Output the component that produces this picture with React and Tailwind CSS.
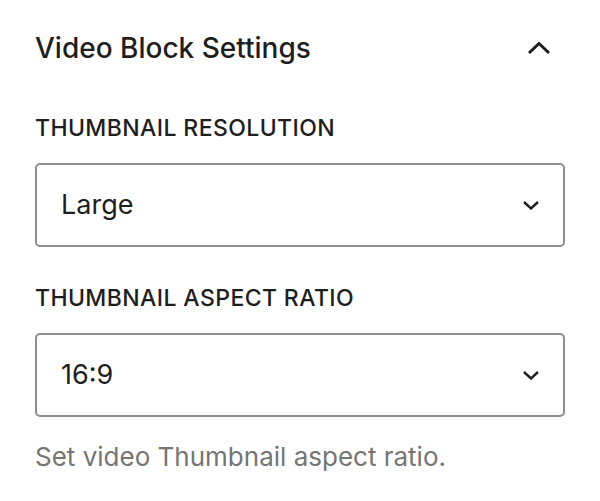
import React, { useState } from 'react';

const ChevronDown = () => (
  <svg width="18" height="10" viewBox="0 0 18 10" fill="none">
    <path d="M2 2l7 6.5L16 2" stroke="#1e1e1e" strokeWidth="2.4" />
  </svg>
);

const SelectControl = ({ label, value, options, onChange, help }) => (
  <div>
    <label className="block text-[23px] leading-[28px] font-medium uppercase tracking-[0.4px] text-[#1e1e1e]">
      {label}
    </label>
    <div className="relative mt-[21px]">
      <select
        value={value}
        onChange={(e) => onChange(e.target.value)}
        className="w-full h-[84px] appearance-none bg-white border-2 border-[#8f8f8f] rounded-[5px] pl-[24px] pr-[60px] text-[27px] text-[#1e1e1e] focus:outline-none"
      >
        {options.map((o) => (
          <option key={o} value={o}>{o}</option>
        ))}
      </select>
      <span className="pointer-events-none absolute right-[25px] top-1/2 -translate-y-1/2 flex">
        <ChevronDown />
      </span>
    </div>
    {help && (
      <p className="mt-[25px] text-[26px] leading-[30px] text-[#757575]">{help}</p>
    )}
  </div>
);

const App = () => {
  const [open, setOpen] = useState(true);
  const [resolution, setResolution] = useState('Large');
  const [ratio, setRatio] = useState('16:9');

  return (
    <div className="w-[600px] h-[501px] bg-white px-[35px] pt-[32px]" style={{ fontFamily: 'Inter, "Noto Sans", sans-serif' }}>
      <button
        type="button"
        onClick={() => setOpen(!open)}
        className="w-full flex items-center justify-between text-left"
      >
        <span className="text-[28px] leading-[32px] font-medium text-[#1e1e1e]">Video Block Settings</span>
        <svg width="24" height="14" viewBox="0 0 24 14" fill="none" className="mr-[14px]">
          <path d="M2 12L12 2.5 22 12" stroke="#1e1e1e" strokeWidth="3" />
        </svg>
      </button>

      {open && (
        <div className="mt-[50px]">
          <SelectControl
            label="Thumbnail Resolution"
            value={resolution}
            onChange={setResolution}
            options={['Thumbnail', 'Medium', 'Large', 'Full Size']}
          />
          <div className="mt-[37px]">
            <SelectControl
              label="Thumbnail Aspect Ratio"
              value={ratio}
              onChange={setRatio}
              options={['16:9', '4:3', '1:1']}
              help="Set video Thumbnail aspect ratio."
            />
          </div>
        </div>
      )}
    </div>
  );
};

export default App;
